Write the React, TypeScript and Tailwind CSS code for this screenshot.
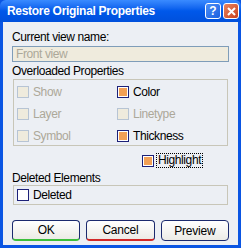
import React from 'react'

const font = { fontFamily: '"Liberation Sans", Arial, sans-serif' }

type BoxProps = { checked?: boolean; disabled?: boolean }

const Box: React.FC<BoxProps> = ({ checked, disabled }) =>
  disabled ? (
    <span className="w-[12px] h-[12px] border border-[#b7c4d4] bg-[#efebdd] shrink-0" />
  ) : (
    <span className="w-[12px] h-[12px] border border-[#1d2178] bg-white p-[1px] shrink-0 flex">
      {checked && <span className="flex-1 bg-[#f2a055]" />}
    </span>
  )

const Check: React.FC<BoxProps & { label: string }> = ({ label, checked, disabled }) => (
  <div className="flex items-center gap-[4px] h-[12px]">
    <Box checked={checked} disabled={disabled} />
    <span className={`text-[12px] leading-[14px] tracking-[-0.4px] ${disabled ? 'text-[#aca899]' : 'text-black'}`}>
      {label}
    </span>
  </div>
)

const XpButton: React.FC<{ label: string; accent?: string }> = ({ label, accent }) => (
  <button
    className={`w-[70px] h-[21px] rounded-[4px] border border-[#1b2a6e] bg-gradient-to-b from-white to-[#ecebe6] text-[12px] tracking-[-0.2px] text-black flex items-center justify-center ${
      accent ?? ''
    }`}
  >
    {label}
  </button>
)

export default function App() {
  return (
    <div className="w-[241px] h-[248px] flex flex-col bg-[#0a55e3]" style={font}>
      {/* Title bar */}
      <div className="h-[22px] flex items-center pl-[7px] pr-[2px] rounded-t-[6px] bg-gradient-to-b from-[#3a8bff] via-[#0058ea] to-[#0050dc]">
        <span className="text-white font-bold text-[12px] tracking-[-0.3px] flex-1">Restore Original Properties</span>
        <div className="flex gap-[2px]">
          <div className="w-[16px] h-[16px] rounded-[3px] border border-white bg-gradient-to-br from-[#4d8ff6] to-[#1a5fe0] flex items-center justify-center text-white text-[12px] font-bold leading-none">
            ?
          </div>
          <div className="w-[16px] h-[16px] rounded-[3px] border border-white bg-gradient-to-br from-[#e9835f] to-[#c8401a] flex items-center justify-center">
            <svg width="9" height="9" viewBox="0 0 9 9">
              <path d="M1 1L8 8M8 1L1 8" stroke="white" strokeWidth="2" />
            </svg>
          </div>
        </div>
      </div>

      {/* Body */}
      <div className="flex-1 mx-[3px] mb-[3px] bg-[#eceff4] flex flex-col px-[9px] pt-[8px] text-[12px] leading-[14px] tracking-[-0.4px]">
        <div className="text-black">Current view name:</div>
        <div className="mt-[2px] h-[16px] border border-[#7f9db9] bg-[#efebdd] text-[#aca899] px-[3px]">Front view</div>

        <div className="mt-[2px] text-black">Overloaded Properties</div>
        <div className="mt-[1px] mx-[1px] h-[67px] border border-[#c8c6b8] grid grid-cols-[100px_1fr] content-start gap-y-[10px] pt-[6px] pl-[3px]">
          <Check label="Show" disabled />
          <Check label="Color" checked />
          <Check label="Layer" disabled />
          <Check label="Linetype" disabled />
          <Check label="Symbol" disabled />
          <Check label="Thickness" checked />
        </div>

        <div className="mt-[7px] flex pl-[130px]">
          <div className="flex items-center gap-[2px]">
            <Box checked />
            <span className="leading-[12px] text-black border border-dotted border-black px-[1px] pb-[1px]">Highlight</span>
          </div>
        </div>

        <div className="mt-[3px] text-black">Deleted Elements</div>
        <div className="mx-[1px] h-[20px] border border-[#c8c6b8] flex items-center pl-[3px]">
          <Check label="Deleted" />
        </div>

        <div className="mt-[15px] flex gap-[6px]">
          <XpButton label="OK" accent="border-b-[2px] border-b-[#3cbf3c]" />
          <XpButton label="Cancel" accent="border-b-[2px] border-b-[#d22828]" />
          <XpButton label="Preview" />
        </div>
      </div>
    </div>
  )
}
